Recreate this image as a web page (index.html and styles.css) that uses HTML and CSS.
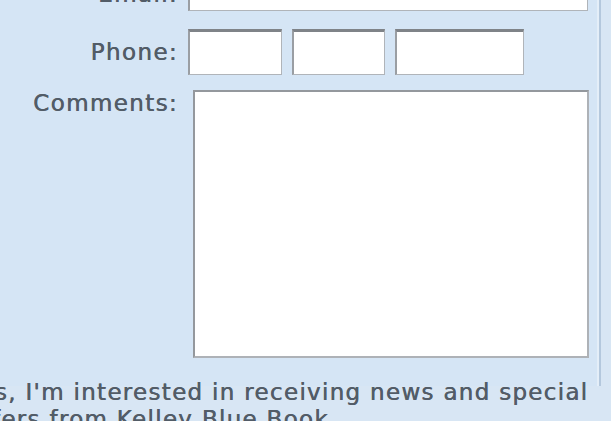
FILE: index.html
```html
<!DOCTYPE html>
<html lang="en">
  <head>
    <meta charset="UTF-8">
    <meta name="viewport" content="width=device-width, initial-scale=1.0">
    <title>Contact Form</title>
    <link rel="stylesheet" href="styles.css">
  </head>
  <body>
    <div id="panel">
      <form id="contact">
        <div class="row email-row">
          <label for="email">Email:</label>
          <input type="text" id="email" class="field email">
        </div>
        <div class="row phone-row">
          <label for="phone1">Phone:</label>
          <div class="phone">
            <input type="text" id="phone1" class="field area">
            <input type="text" class="field prefix">
            <input type="text" class="field line">
          </div>
        </div>
        <div class="row comments-row">
          <label for="comments">Comments:</label>
          <textarea id="comments"></textarea>
        </div>
      </form>
      <p class="optin">Yes, I'm interested in receiving news and special<br>offers from Kelley Blue Book.</p>
    </div>
  </body>
</html>
```

FILE: styles.css
```css
html, body {
    margin: 0;
    padding: 0;
    height: 100%;
    overflow: hidden;
}
body {
    background-color: #d8e6f4;
    font-family: "DejaVu Sans", Verdana, sans-serif;
    font-size: 23px;
    letter-spacing: 1.4px;
    color: #525c67;
    text-shadow: 0.5px 0 0 #525c67;
}
#panel {
    width: 599px;
    height: 100%;
    background-color: #d5e5f5;
    border-right: 2px solid #b4c8dd;
    box-shadow: inset -2px 0 0 #e4eef8;
}
#contact {
    margin: -35px 0 0 0;
}
.row {
    display: grid;
    grid-template-columns: 178px 1fr;
    column-gap: 10px;
    line-height: 27px;
}
.row label {
    text-align: right;
}
.email-row label {
    align-self: end;
    padding-bottom: 3px;
}
.phone-row {
    margin-top: 18px;
    align-items: center;
}
.comments-row {
    margin-top: 15px;
    align-items: start;
}
.field {
    box-sizing: border-box;
    height: 46px;
    margin: 0;
    background: #fff;
    border: 1px solid #b0b4b9;
    border-top: 3px solid #7f8388;
    border-left: 2px solid #9a9ea3;
}
.email {
    width: 400px;
}
.phone {
    display: flex;
    gap: 10px;
}
.area {
    width: 94px;
}
.prefix {
    width: 93px;
}
.line {
    width: 129px;
}
textarea {
    box-sizing: border-box;
    width: 396px;
    height: 268px;
    margin: 0 0 0 5px;
    background: #fff;
    border: 2px solid #aeb2b7;
    border-top-color: #94989d;
    border-left-color: #94989d;
    resize: none;
}
.optin {
    margin: 21px 0 0 -33px;
    width: 660px;
    line-height: 27px;
    white-space: nowrap;
    letter-spacing: 1.3px;
}
```
